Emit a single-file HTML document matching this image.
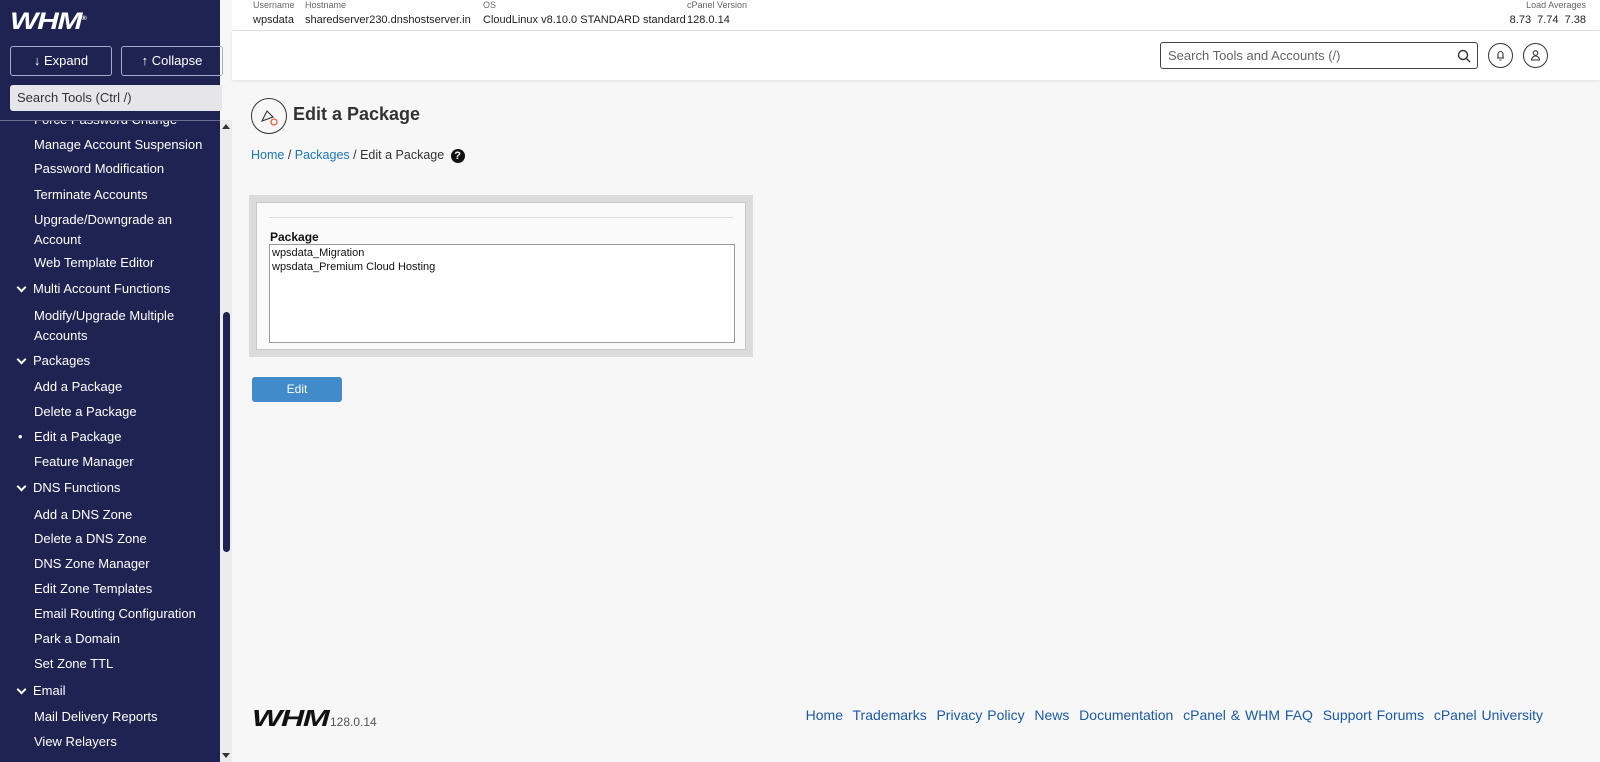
<!DOCTYPE html>
<html><head><meta charset="utf-8"><style>
*{box-sizing:border-box;margin:0;padding:0}
body{width:1600px;height:762px;overflow:hidden;background:#f7f7f7;font-family:"Liberation Sans",sans-serif;position:relative}
#sb{position:absolute;left:0;top:0;width:220px;height:762px;background:#1f2352;color:#fff}
#sbar{position:absolute;left:220px;top:120px;width:12px;height:642px;background:#ececec}
#thumb{position:absolute;left:223px;top:312px;width:7px;height:240px;background:#1f2352;border-radius:4px}
.logo{position:absolute;left:10px;top:8px;font:italic 900 24px "Liberation Sans";letter-spacing:-1px;color:#fff;transform:scaleX(1.25);transform-origin:left}
.btn{position:absolute;top:46px;width:102px;height:30px;border:1px solid #a8acc8;border-radius:3px;color:#fff;font-size:13px;text-align:center;line-height:28px}
.srch{position:absolute;left:10px;top:85px;width:212px;height:26px;background:#e6e6ea;border-radius:3px;color:#333;font-size:13px;line-height:26px;padding-left:7px}
.menu{position:absolute;left:0;top:120px;width:220px;height:642px;overflow:hidden;border-top:1px solid #6a6d90}
.it{position:absolute;left:34px;font-size:13px;color:#fff;line-height:20px}
.hd{position:absolute;left:33px;font-size:13px;color:#fff}
.hd:before{content:"";position:absolute;left:-15px;top:3px;width:5px;height:5px;border-right:2px solid #fff;border-bottom:2px solid #fff;transform:rotate(45deg)}
#top{position:absolute;left:232px;top:0;width:1368px;height:31px;background:#fff;border-bottom:1px solid #e4e4e4}
.lb{position:absolute;top:0;font-size:9px;color:#666}
.vl{position:absolute;top:14px;font-size:11px;color:#222}
#bar{position:absolute;left:232px;top:31px;width:1368px;height:49px;background:#fff;box-shadow:0 1px 3px rgba(0,0,0,.1)}
</style></head><body>
<div id="sb">
<div class="logo">WHM<sup style="font-size:6px">®</sup></div>
<div class="btn" style="left:10px">↓ Expand</div>
<div class="btn" style="left:121px">↑ Collapse</div>
<div class="srch">Search Tools (Ctrl /)</div>
<div class="menu">
<div class="it" style="top:-11px">Force Password Change</div>
<div class="it" style="top:14px">Manage Account Suspension</div>
<div class="it" style="top:38px">Password Modification</div>
<div class="it" style="top:64px">Terminate Accounts</div>
<div class="it" style="top:89px">Upgrade/Downgrade an<br>Account</div>
<div class="it" style="top:132px">Web Template Editor</div>
<div class="hd" style="top:160px">Multi Account Functions</div>
<div class="it" style="top:185px">Modify/Upgrade Multiple<br>Accounts</div>
<div class="hd" style="top:232px">Packages</div>
<div class="it" style="top:256px">Add a Package</div>
<div class="it" style="top:281px">Delete a Package</div>
<div class="it" style="top:306px"><span style="position:absolute;left:-16px">•</span>Edit a Package</div>
<div class="it" style="top:331px">Feature Manager</div>
<div class="hd" style="top:359px">DNS Functions</div>
<div class="it" style="top:384px">Add a DNS Zone</div>
<div class="it" style="top:408px">Delete a DNS Zone</div>
<div class="it" style="top:433px">DNS Zone Manager</div>
<div class="it" style="top:458px">Edit Zone Templates</div>
<div class="it" style="top:483px">Email Routing Configuration</div>
<div class="it" style="top:508px">Park a Domain</div>
<div class="it" style="top:533px">Set Zone TTL</div>
<div class="hd" style="top:562px">Email</div>
<div class="it" style="top:586px">Mail Delivery Reports</div>
<div class="it" style="top:611px">View Relayers</div>
</div>
</div>
<div id="sbar"><div style="position:absolute;left:2px;top:4px;border:4px solid transparent;border-bottom:5px solid #333;border-top:0"></div><div style="position:absolute;left:2px;bottom:4px;border:4px solid transparent;border-top:5px solid #333;border-bottom:0"></div></div>
<div id="thumb"></div>
<div id="top">
<div class="lb" style="left:21px">Username</div><div class="vl" style="left:21px">wpsdata</div>
<div class="lb" style="left:73px">Hostname</div><div class="vl" style="left:73px">sharedserver230.dnshostserver.in</div>
<div class="lb" style="left:251px">OS</div><div class="vl" style="left:251px">CloudLinux v8.10.0 STANDARD standard</div>
<div class="lb" style="left:455px">cPanel Version</div><div class="vl" style="left:455px">128.0.14</div>
<div class="lb" style="right:14px">Load Averages</div><div class="vl" style="right:14px;word-spacing:3px">8.73 7.74 7.38</div>
</div>
<div id="bar">
<div style="position:absolute;left:928px;top:11px;width:318px;height:27px;border:1px solid #444;border-radius:3px;background:#fff;font-size:13px;color:#666;line-height:25px;padding-left:7px">Search Tools and Accounts (/)
<svg style="position:absolute;right:6px;top:6px" width="14" height="14" viewBox="0 0 14 14"><circle cx="6" cy="6" r="4.5" fill="none" stroke="#333" stroke-width="1.4"/><path d="M9.5 9.5L13 13" stroke="#333" stroke-width="1.4"/></svg></div>
<div style="position:absolute;left:1256px;top:12px;width:25px;height:25px;border:1px solid #333;border-radius:50%"><svg width="23" height="23" viewBox="0 0 23 23"><path d="M8 14h7M9 14v-4a2.5 2.5 0 015 0v4M10.5 16h2" fill="none" stroke="#333" stroke-width="1.1"/></svg></div>
<div style="position:absolute;left:1291px;top:12px;width:25px;height:25px;border:1px solid #333;border-radius:50%"><svg width="23" height="23" viewBox="0 0 23 23"><circle cx="11.5" cy="9" r="2.3" fill="none" stroke="#333" stroke-width="1.1"/><path d="M7.5 16a4 4 0 018 0z" fill="none" stroke="#333" stroke-width="1.1"/></svg></div>
</div>
<div style="position:absolute;left:251px;top:98px;width:36px;height:36px;border:1.3px solid #333;border-radius:50%"><svg width="34" height="34" viewBox="0 0 34 34"><path d="M10 22l5-10 6 6z" fill="none" stroke="#333" stroke-width="1.1"/><circle cx="22" cy="23" r="3" fill="none" stroke="#e8623a" stroke-width="1.3"/></svg></div>
<div style="position:absolute;left:293px;top:104px;font-size:18px;font-weight:bold;color:#333">Edit a Package</div>
<div style="position:absolute;left:251px;top:148px;font-size:12.5px;color:#333"><span style="color:#1b75bb">Home</span> / <span style="color:#1b75bb">Packages</span> / Edit a Package <span style="display:inline-block;width:14px;height:14px;border-radius:50%;background:#111;color:#fff;font-size:11px;font-weight:bold;text-align:center;line-height:14px;margin-left:3px">?</span></div>
<div style="position:absolute;left:249px;top:195px;width:504px;height:162px;background:#dcdcdc;padding:7px">
<div style="width:490px;height:148px;background:#fafafa;border:1px solid #c8c8c8;position:relative">
<div style="position:absolute;left:12px;right:12px;top:14px;border-top:1px solid #ddd"></div>
<div style="position:absolute;left:13px;top:27px;font-size:12px;font-weight:bold;color:#111">Package</div>
<div style="position:absolute;left:12px;top:41px;width:466px;height:99px;border:1px solid #999;background:#fff;font-size:11px;color:#111;padding:1px 2px;line-height:14px">wpsdata_Migration<br>wpsdata_Premium Cloud Hosting</div>
</div></div>
<div style="position:absolute;left:252px;top:377px;width:90px;height:25px;background:#428bca;border-radius:3px;color:#fff;font-size:12px;text-align:center;line-height:25px">Edit</div>
<div style="position:absolute;left:252px;top:705px;font:italic 900 23px 'Liberation Sans';color:#111;letter-spacing:-1px;transform:scaleX(1.4);transform-origin:left">WHM</div>
<div style="position:absolute;left:330px;top:715px;font-size:12px;color:#555">128.0.14</div>
<div style="position:absolute;right:57px;top:707px;font-size:14px;color:#1b5aa8;word-spacing:1px">Home&nbsp; Trademarks&nbsp; Privacy Policy&nbsp; News&nbsp; Documentation&nbsp; cPanel &amp; WHM FAQ&nbsp; Support Forums&nbsp; cPanel University</div>
</body></html>
